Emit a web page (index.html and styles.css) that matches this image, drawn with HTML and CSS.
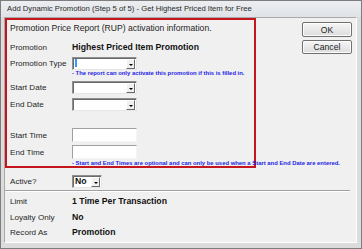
FILE: index.html
```html
<!DOCTYPE html>
<html lang="en">
<head>
    <meta charset="UTF-8">
    <title>Add Dynamic Promotion</title>
    <link rel="stylesheet" href="styles.css">
</head>
<body>
    <div class="window">
        <div class="titlebar">Add Dynamic Promotion (Step 5 of 5) - Get Highest Priced Item for Free</div>
        <div class="client">
            <div class="top">
                <div class="activation">
                    <div class="intro">Promotion Price Report (RUP) activation information.</div>
                    <div class="row first">
                        <span class="label">Promotion</span>
                        <span class="value">Highest Priced Item Promotion</span>
                    </div>
                    <div class="row tight">
                        <span class="label">Promotion Type</span>
                        <span class="combo"><span class="caret"></span><span class="drop"></span></span>
                    </div>
                    <div class="note">- The report can only activate this promotion if this is filled in.</div>
                    <div class="row date-start">
                        <span class="label">Start Date</span>
                        <span class="combo"><span class="drop"></span></span>
                    </div>
                    <div class="row">
                        <span class="label">End Date</span>
                        <span class="combo"><span class="drop"></span></span>
                    </div>
                    <div class="row time-start">
                        <span class="label">Start Time</span>
                        <span class="textbox"></span>
                    </div>
                    <div class="row">
                        <span class="label">End Time</span>
                        <span class="textbox"></span>
                    </div>
                    <div class="note last">- Start and End Times are optional and can only be used when a Start and End Date are entered.</div>
                </div>
                <div class="buttons">
                    <button>OK</button>
                    <button>Cancel</button>
                </div>
            </div>

            <div class="row active">
                <span class="label">Active?</span>
                <span class="combo small"><span class="combo-text">No</span><span class="drop"></span></span>
            </div>

            <div class="separator"></div>

            <div class="row info">
                <span class="label">Limit</span>
                <span class="value">1 Time Per Transaction</span>
            </div>
            <div class="row info">
                <span class="label">Loyalty Only</span>
                <span class="value">No</span>
            </div>
            <div class="row info last-info">
                <span class="label">Record As</span>
                <span class="value">Promotion</span>
            </div>
        </div>
    </div>
</body>
</html>
```

FILE: styles.css
```css
body {
    margin: 0;
    font-family: "Liberation Sans", Arial, sans-serif;
    font-size: 8.6px;
    color: #262626;
    background: #ffffff;
}

.window {
    width: 362px;
    height: 249px;
    box-sizing: border-box;
    border: 1px solid #7d7d7d;
    background: #dcdcdc;
    padding: 0 4px 5px 3px;
    display: flex;
    flex-direction: column;
}

.titlebar {
    height: 16px;
    line-height: 15px;
    font-size: 7.7px;
    color: #2a2a2a;
    white-space: nowrap;
    background: linear-gradient(#eceef1, #dfe2e6);
    margin: 0 -4px 0 -3px;
    padding-left: 6px;
}

.client {
    flex: 1;
    border: 1px solid #a8a8a8;
    border-right-color: #ffffff;
    border-bottom-color: #ffffff;
    background: #f0f0f0;
    display: flex;
    flex-direction: column;
}

.top {
    display: flex;
    justify-content: space-between;
    align-items: flex-start;
}

.activation {
    width: 251px;
    height: 150px;
    box-sizing: border-box;
    border: 2px solid #c4161c;
    padding-left: 3px;
    display: flex;
    flex-direction: column;
}

.intro {
    height: 16px;
    line-height: 16px;
    white-space: nowrap;
}

.row {
    display: flex;
    align-items: center;
    height: 14px;
    margin-top: 3px;
}

.row.first {
    margin-top: 4px;
}

.row.tight {
    margin-top: 2px;
}

.row.date-start {
    margin-top: 4px;
}

.row.time-start {
    margin-top: 17px;
}

.label {
    width: 62px;
    flex-shrink: 0;
    font-size: 8.1px;
    white-space: nowrap;
}

.value {
    font-weight: bold;
    font-size: 8.7px;
    color: #111;
    white-space: nowrap;
}

.note {
    height: 6px;
    line-height: 6px;
    margin-left: 62px;
    font-size: 5.9px;
    font-weight: bold;
    color: #2323e6;
    white-space: nowrap;
}

.note.last {
    margin-top: 1px;
}

.combo {
    position: relative;
    width: 65px;
    height: 13px;
    box-sizing: border-box;
    background: #fff;
    border: 1px solid;
    border-color: #8e8e8e #e6e6e6 #e6e6e6 #8e8e8e;
    box-shadow: inset 1px 1px 0 #6a6a6a;
    display: flex;
    align-items: center;
    padding-left: 2px;
}

.combo.small {
    width: 30px;
}

.combo-text {
    font-weight: bold;
    font-size: 8.7px;
    color: #111;
}

.caret {
    width: 2px;
    height: 8px;
    background: #3399ff;
}

.drop {
    position: absolute;
    right: 1px;
    top: 1px;
    bottom: 0;
    width: 9px;
    box-sizing: border-box;
    background: #f0f0f0;
    border: 1px solid;
    border-color: #ffffff #6a6a6a #6a6a6a #ffffff;
}

.drop::after {
    content: "";
    position: absolute;
    left: 2px;
    top: 4px;
    border-left: 2px solid transparent;
    border-right: 2px solid transparent;
    border-top: 2px solid #000;
}

.textbox {
    width: 65px;
    height: 14px;
    box-sizing: border-box;
    background: #fff;
    border: 1px solid;
    border-color: #a0a0a0 #f4f4f4 #f4f4f4 #a0a0a0;
}

.buttons {
    display: flex;
    flex-direction: column;
    gap: 3px;
    padding-top: 4px;
    margin-right: 4px;
}

.buttons button {
    width: 50px;
    height: 15px;
    margin: 0;
    padding: 0;
    font-family: "Liberation Sans", Arial, sans-serif;
    font-size: 8.6px;
    color: #222;
    background: linear-gradient(#f6f6f6, #dcdcdc);
    border: 1px solid #707070;
    border-radius: 2px;
    box-shadow: inset 0 0 0 1px #fcfcfc;
}

.buttons button + button {
    height: 14px;
}

.row.active {
    margin-top: 6px;
    padding-left: 5px;
}

.separator {
    height: 0;
    margin: 2px 6px 0 0;
    border-top: 1px solid #a0a0a0;
    border-bottom: 1px solid #ffffff;
}

.row.info {
    padding-left: 5px;
    margin-top: 2px;
}

.row.last-info {
    margin-top: 1px;
}
```
